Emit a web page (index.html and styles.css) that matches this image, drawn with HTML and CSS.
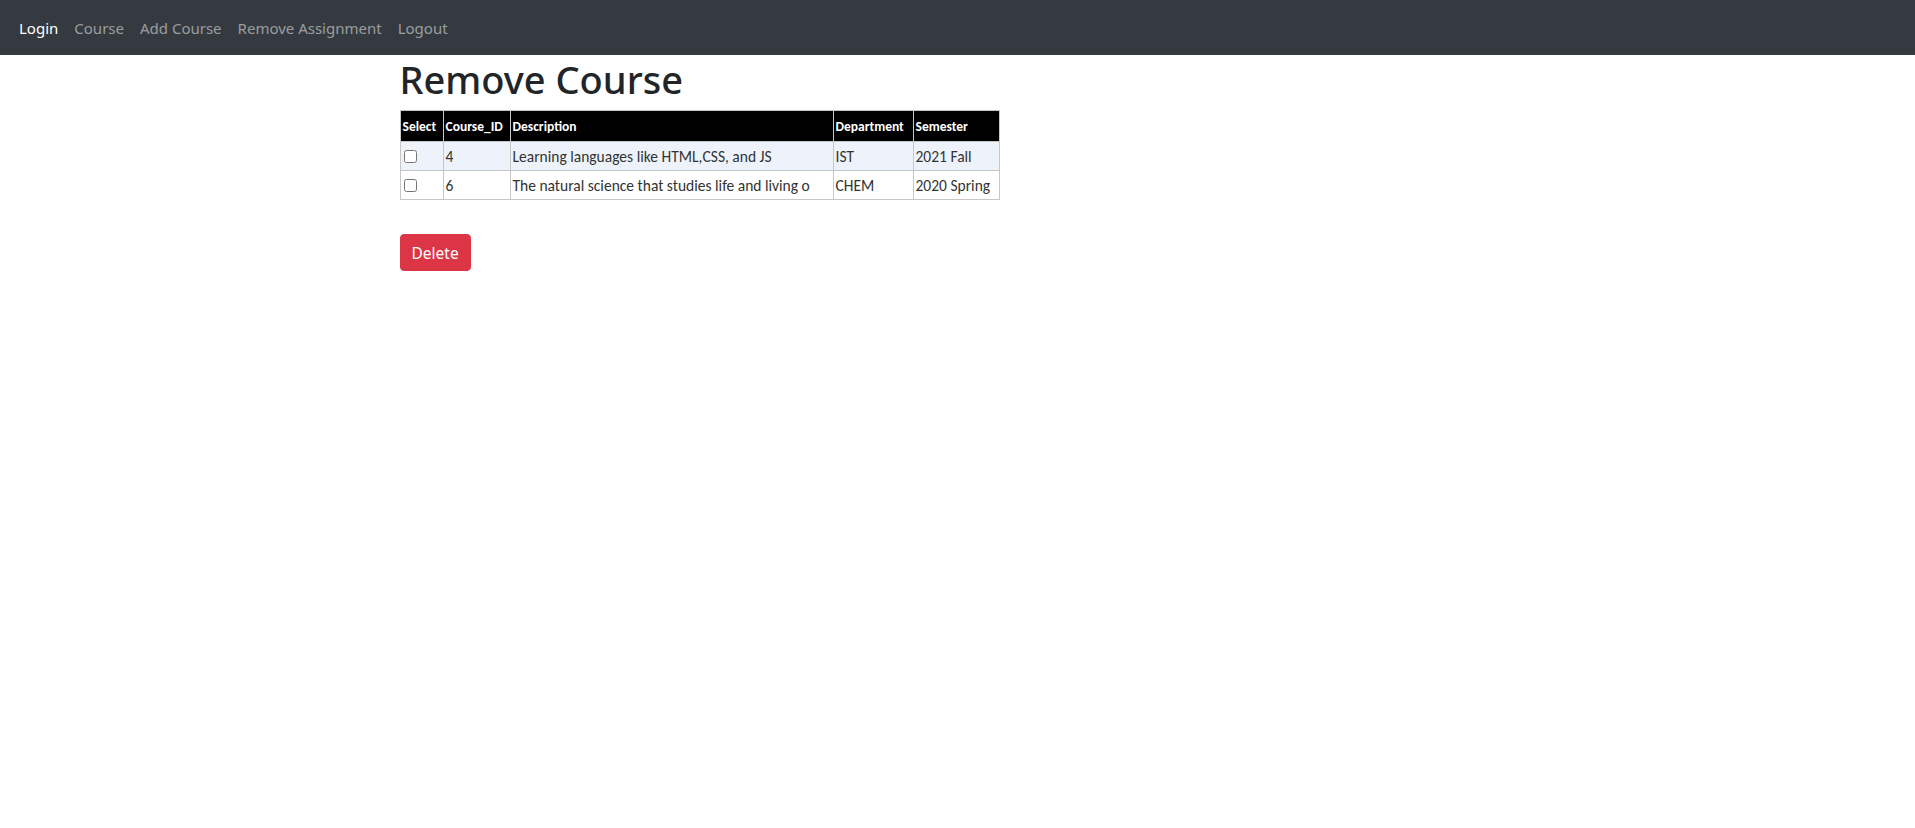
FILE: index.html
```html
<!DOCTYPE html>
<html>
<head>
<meta charset="utf-8">
<title>Remove Course</title>
<link rel="stylesheet" href="styles.css">
</head>
<body>
<nav class="navbar">
  <a class="nav-link active" href="#">Login</a>
  <a class="nav-link" href="#">Course</a>
  <a class="nav-link" href="#">Add Course</a>
  <a class="nav-link" href="#">Remove Assignment</a>
  <a class="nav-link" href="#">Logout</a>
</nav>
<main class="container">
  <h1 class="title">Remove Course</h1>
  <table class="courses">
    <colgroup>
      <col class="c-select"><col class="c-id"><col class="c-desc"><col class="c-dept"><col class="c-sem">
    </colgroup>
    <thead>
      <tr><th>Select</th><th>Course_ID</th><th>Description</th><th>Department</th><th>Semester</th></tr>
    </thead>
    <tbody>
      <tr class="alt"><td><input type="checkbox" class="chk"></td><td>4</td><td>Learning languages like HTML,CSS, and JS</td><td>IST</td><td>2021 Fall</td></tr>
      <tr><td><input type="checkbox" class="chk"></td><td>6</td><td>The natural science that studies life and living o</td><td>CHEM</td><td>2020 Spring</td></tr>
    </tbody>
  </table>
  <div class="actions">
    <button class="btn-danger" type="button">Delete</button>
  </div>
</main>
</body>
</html>
```
FILE: styles.css
```css
html, body {
  margin: 0;
  padding: 0;
  background: #fff;
}
body {
  font-family: "Noto Sans", "Open Sans", sans-serif;
  color: #212529;
}
.navbar {
  height: 55px;
  background: #343a40;
  display: flex;
  align-items: center;
  padding-left: 19px;
  gap: 16px;
  box-sizing: border-box;
}
.nav-link {
  color: rgba(255,255,255,0.5);
  text-decoration: none;
  font-size: 15px;
  line-height: 24px;
}
.nav-link.active {
  color: #fff;
}
.container {
  max-width: 1140px;
  margin: 0 auto;
  padding: 0 12px;
  box-sizing: border-box;
}
.title {
  margin: 0 0 7px;
  font-size: 38px;
  font-weight: 500;
  line-height: 48px;
  color: #212529;
}
.courses {
  border-collapse: collapse;
  table-layout: fixed;
  width: 599px;
  font-family: "Carlito", "Lato", sans-serif;
  font-size: 15.5px;
  color: #333;
}
.c-select { width: 43px; }
.c-id { width: 67px; }
.c-desc { width: 323px; }
.c-dept { width: 80px; }
.c-sem { width: 86px; }
.courses th {
  background: #000;
  color: #fff;
  font-weight: bold;
  font-size: 13.5px;
  text-align: left;
  height: 31px;
  padding: 0 2px;
  border: 1px solid #c7c7c7;
  white-space: nowrap;
  overflow: hidden;
  box-sizing: border-box;
}
.courses td {
  height: 29px;
  padding: 1px 2px 0;
  border: 1px solid #c7c7c7;
  white-space: nowrap;
  overflow: hidden;
  box-sizing: border-box;
}
.courses tr.alt td {
  background: #eef3fb;
}
.chk {
  width: 13px;
  height: 13px;
  margin: 0 0 0 1px;
  vertical-align: -1px;
}
.actions {
  margin-top: 34px;
}
.btn-danger {
  background: #dc3545;
  color: #fff;
  border: 1px solid #dc3545;
  border-radius: 4px;
  height: 37px;
  padding: 0 11px;
  font-family: "Noto Sans", "Open Sans", sans-serif;
  font-size: 15.5px;
  cursor: pointer;
}
```
